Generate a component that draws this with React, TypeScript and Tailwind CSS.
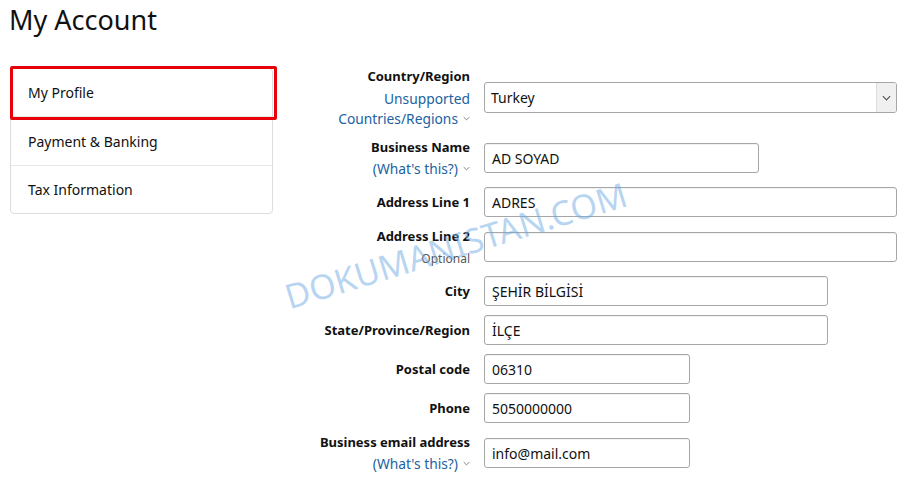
import React from 'react';

const font = { fontFamily: '"Noto Sans", Roboto, Arial, sans-serif' };

function Chevron({ className = '' }: { className?: string }) {
    return (
        <svg viewBox="0 0 10 6" className={className} fill="none" stroke="currentColor" strokeWidth="1.3">
            <path d="M1 1l4 4 4-4" />
        </svg>
    );
}

function TextInput({ value, width }: { value: string; width: string }) {
    return (
        <div className={`${width} h-[30px] border border-[#a6a6a6] rounded-[3px] bg-white flex items-center px-[7px] text-[14px] text-[#111] shadow-[inset_0_1px_0_rgba(0,0,0,0.05)]`}>
            {value}
        </div>
    );
}

function Label({ children }: { children: React.ReactNode }) {
    return <div className="font-bold text-[13px] leading-[20px] text-[#111]">{children}</div>;
}

function Help({ children, className = '' }: { children: React.ReactNode; className?: string }) {
    return (
        <div className={`text-[13.8px] leading-[21px] text-[#2162a1] flex items-center justify-end gap-[5px] ${className}`}>
            {children}
        </div>
    );
}

export default function App(): React.ReactElement {
    const simpleRows = [
        { label: 'City', value: 'ŞEHİR BİLGİSİ', width: 'w-[344px]' },
        { label: 'State/Province/Region', value: 'İLÇE', width: 'w-[344px]' },
        { label: 'Postal code', value: '06310', width: 'w-[206px]' },
        { label: 'Phone', value: '5050000000', width: 'w-[206px]' },
    ];

    return (
        <div className="relative w-[914px] h-[486px] bg-white overflow-hidden" style={font}>
            <h1 className="pl-[9px] pt-[2px] text-[27px] leading-[36px] text-[#111]">My Account</h1>

            <div className="flex mt-[30px]">
                {/* Sidebar */}
                <div className="ml-[10px] w-[263px] self-start border border-[#dddddd] rounded-[4px] text-[14px] text-[#111] bg-white">
                    <div className="relative h-[48px] flex items-center pl-[17px] border-b border-[#e7e7e7]">
                        My Profile
                        <div className="absolute -left-[1px] -top-[3px] w-[267px] h-[54px] border-[3px] border-[#e8000b] rounded-[2px]" />
                    </div>
                    <div className="h-[49px] flex items-center pl-[17px] border-b border-[#e7e7e7]">Payment &amp; Banking</div>
                    <div className="h-[47px] flex items-center pl-[17px]">Tax Information</div>
                </div>

                {/* Form */}
                <div className="flex flex-col gap-[9px] -mt-[2px]">
                    {/* Country */}
                    <div className="flex items-start -mb-[1px]">
                        <div className="w-[197px] text-right">
                            <div className="font-bold text-[13px] leading-[21px] text-[#111]">Country/Region</div>
                            <Help className="relative top-[1px]">Unsupported</Help>
                            <Help>
                                Countries/Regions <Chevron className="w-[7px] h-[5px] text-[#777]" />
                            </Help>
                        </div>
                        <div className="ml-[14px] mt-[16px] w-[413px] h-[31px] border border-[#a6a6a6] rounded-[3px] bg-white flex text-[14px] text-[#111] overflow-hidden">
                            <div className="flex-1 flex items-center px-[6px]">Turkey</div>
                            <div className="w-[20px] bg-[#f0f0f0] border-l border-[#dcdcdc] flex items-center justify-center">
                                <Chevron className="w-[9px] h-[6px] text-[#555]" />
                            </div>
                        </div>
                    </div>

                    {/* Business name */}
                    <div className="flex items-start">
                        <div className="w-[197px] text-right">
                            <Label>Business Name</Label>
                            <Help className="relative top-[1px]">
                                (What's this?) <Chevron className="w-[7px] h-[5px] text-[#777]" />
                            </Help>
                        </div>
                        <div className="ml-[14px] mt-[6px]">
                            <TextInput value="AD SOYAD" width="w-[275px]" />
                        </div>
                    </div>

                    {/* Address 1 */}
                    <div className="flex items-center">
                        <div className="w-[197px] text-right">
                            <Label>Address Line 1</Label>
                        </div>
                        <div className="ml-[14px]">
                            <TextInput value="ADRES" width="w-[413px]" />
                        </div>
                    </div>

                    {/* Address 2 */}
                    <div className="flex items-start">
                        <div className="w-[197px] text-right">
                            <Label>Address Line 2</Label>
                            <div className="text-[12px] leading-[16px] mt-[5px] text-[#555]">Optional</div>
                        </div>
                        <div className="ml-[14px] mt-[6px]">
                            <TextInput value="" width="w-[413px]" />
                        </div>
                    </div>

                    {simpleRows.map((row) => (
                        <div key={row.label} className="flex items-center">
                            <div className="w-[197px] text-right">
                                <Label>{row.label}</Label>
                            </div>
                            <div className="ml-[14px]">
                                <TextInput value={row.value} width={row.width} />
                            </div>
                        </div>
                    ))}

                    {/* Business email */}
                    <div className="flex items-start">
                        <div className="w-[197px] text-right">
                            <Label>Business email address</Label>
                            <Help className="relative top-[1px]">
                                (What's this?) <Chevron className="w-[7px] h-[5px] text-[#777]" />
                            </Help>
                        </div>
                        <div className="ml-[14px] mt-[6px]">
                            <TextInput value="info@mail.com" width="w-[206px]" />
                        </div>
                    </div>
                </div>
            </div>

            {/* Watermark, translucent over the page */}
            <div className="absolute left-[278px] top-[220px] -rotate-[17deg] origin-center text-[34px] text-[#6fabe3]/50 pointer-events-none whitespace-nowrap">
                DOKUMANISTAN.COM
            </div>
        </div>
    );
}
